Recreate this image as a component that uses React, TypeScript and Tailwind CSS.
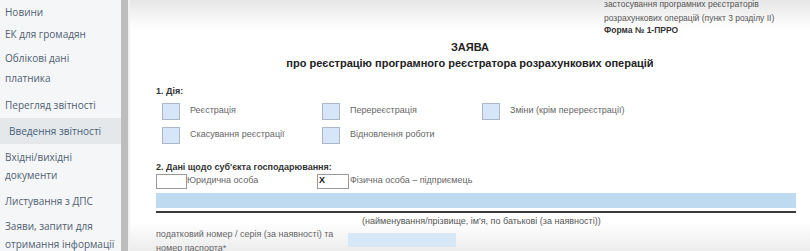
import React from 'react';

const menu = [
  { label: ['Новини'], h: 'h-[23px]' },
  { label: ['ЕК для громадян'], h: 'h-[21px]' },
  { label: ['Облікові дані', 'платника'], h: 'h-[48px]', lh: 'leading-[20px]' },
  { label: ['Перегляд звітності'], h: 'h-[26px]' },
  { label: ['Введення звітності'], h: 'h-[26px]', active: true },
  { label: ['Вхідні/вихідні', 'документи'], h: 'h-[44px]', lh: 'leading-[18px]' },
  { label: ['Листування з ДПС'], h: 'h-[26px]' },
  { label: ['Заяви, запити для', 'отримання інформації'], h: 'h-[42px]', lh: 'leading-[18px]' },
];

function Checkbox({ label }: { label: string }) {
  return (
    <div className="flex items-center gap-[10px]">
      <span className="block w-[18px] h-[17px] bg-[#d6e6f8] border border-[#a9b7c6]" />
      <span>{label}</span>
    </div>
  );
}

export default function App() {
  return (
    <div className="flex w-[810px] h-[251px] overflow-hidden bg-white">
      {/* Sidebar */}
      <aside className="w-[121px] shrink-0 bg-[#f4f6f8] font-['Open_Sans',sans-serif] text-[10px] text-[#526070]">
        {menu.map((item, i) => (
          <div
            key={i}
            className={`${item.h} flex flex-col justify-center ${item.lh || 'leading-[18px]'} ${
              item.active ? 'bg-[#e5e8eb] pl-[9px] text-[#46607c]' : 'pl-[5px]'
            }`}
          >
            {item.label.map(l => (
              <span key={l} className="whitespace-nowrap">{l}</span>
            ))}
          </div>
        ))}
      </aside>
      {/* scrollbar */}
      <div className="w-[7px] shrink-0 bg-[#bdbdbd]" />
      <div className="w-[2px] shrink-0 bg-[#f1f1f1]" />

      {/* Form */}
      <main className="flex-1 bg-[linear-gradient(to_bottom,#e6e6e6_0px,#fbfbfb_24px,#ffffff_30px,#ffffff_222px,#ececec_251px)] pl-[26px] pr-[14px] font-['Liberation_Sans',Arial,sans-serif] text-[9px] text-[#555]">
        <div className="pl-[448px] -mt-[2px] text-[8.5px] leading-[13.5px] text-[#555]">
          <div>застосування програмних реєстраторів</div>
          <div>розрахункових операцій (пункт 3 розділу II)</div>
          <div className="font-bold text-[#333] -mt-[1px]">Форма № 1-ПРРО</div>
        </div>

        <div className="text-center font-bold text-[#222] mt-[1px] -ml-[26px] -mr-[14px]">
          <div className="text-[11px] leading-[16px]">ЗАЯВА</div>
          <div className="text-[11px] leading-[16px]">
            про реєстрацію програмного реєстратора розрахункових операцій
          </div>
        </div>

        <div className="mt-[14px] font-bold text-[#333] leading-[12px]">1. Дія:</div>
        <div className="mt-[6px] pl-[6px] grid grid-cols-[160px_160px_160px] gap-y-[7px] text-[#666]">
          <Checkbox label="Реєстрація" />
          <Checkbox label="Перереєстрація" />
          <Checkbox label="Зміни (крім перереєстрації)" />
          <Checkbox label="Скасування реєстрації" />
          <Checkbox label="Відновлення роботи" />
        </div>

        <div className="mt-[17px] font-bold text-[#333] leading-[12px]">
          2. Дані щодо суб'єкта господарювання:
        </div>
        <div className="mt-[1px] flex items-center text-[#666]">
          <div className="flex items-center w-[161px]">
            <span className="block w-[31px] h-[15px] bg-white border border-[#9a9a9a]" />
            <span>Юридична особа</span>
          </div>
          <div className="flex items-center">
            <span className="flex items-center w-[32px] h-[15px] bg-white border border-[#9a9a9a] pl-[1px] font-bold text-[#111]">
              X
            </span>
            <span className="ml-[1px]">Фізична особа – підприємець</span>
          </div>
        </div>
        <div className="mt-[4px] h-[15px] bg-[#bedaf0]" />
        <div className="mt-[3px] h-[2px] bg-[#3a3a3a]" />
        <div className="pl-[206px] leading-[12px] mt-[2px] text-[#555]">
          (найменування/прізвище, ім'я, по батькові (за наявності))
        </div>
        <div className="flex items-start text-[#666]">
          <div className="w-[192px] leading-[14px]">
            <div>податковий номер / серія (за наявності) та</div>
            <div>номер паспорта*</div>
          </div>
          <div className="mt-[6px] w-[108px] h-[14px] bg-[#d8e7f6]" />
        </div>
      </main>
    </div>
  );
}
